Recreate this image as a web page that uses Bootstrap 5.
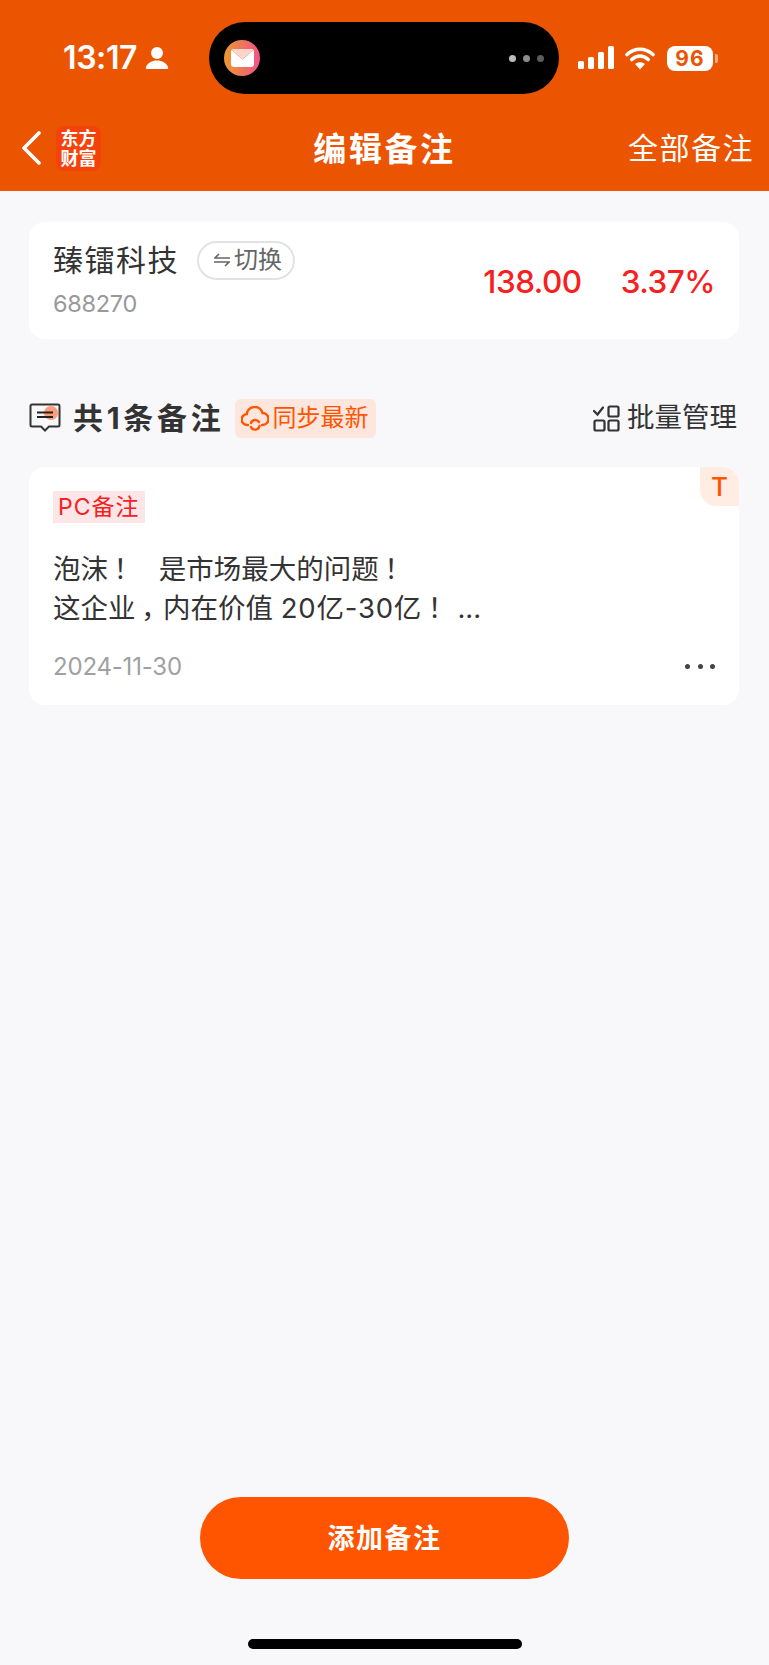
<!DOCTYPE html>
<html lang="zh-CN">
<head>
  <meta charset="UTF-8" />
  <meta name="viewport" content="width=device-width, initial-scale=1.0" />
  <title>编辑备注</title>
  <link rel="stylesheet" href="https://cdn.jsdelivr.net/npm/bootstrap@5.3.0/dist/css/bootstrap.min.css" />
  <style>
    body { background: #f8f8fa; font-family: Inter, "Noto Sans CJK SC", sans-serif; color: #333; width: 769px; height: 1665px; overflow: hidden; }
    .app-top { background: #eb5502; height: 191px; color: #fff; }
    .status-row { padding: 22px 0 0 63px; }
    .clock { width: 74px; font-size: 32px; font-weight: 600; line-height: 72px; letter-spacing: -.4px; white-space: nowrap; }
    .island { width: 350px; height: 72px; border-radius: 36px; background: #000; margin-left: 40px; padding: 0 15px; }
    .mail-dot { width: 36px; height: 36px; border-radius: 50%; background: linear-gradient(90deg, #ec9a2c, #f2528a); }
    .island-dots { gap: 7px; }
    .island-dots i { width: 7px; height: 7px; border-radius: 50%; display: block; }
    .batt { width: 46px; height: 25px; background: #fff; border-radius: 8px; color: #eb5502; font-size: 21px; font-weight: 700; line-height: 25px; text-align: center; letter-spacing: 1px; margin-left: 12px; }
    .batt-nub { width: 3px; height: 9px; background: rgba(255,255,255,.5); border-radius: 0 2px 2px 0; margin-left: 2px; }
    .nav-row { height: 97px; padding: 11px 15px 0 21px; position: relative; }
    .app-logo { width: 45px; height: 45px; background: #f5420a; border-radius: 8px; font-size: 18px; line-height: 20px; font-weight: 700; text-align: center; margin-left: 15px; padding-top: 3px; }
    .page-title { position: absolute; left: 0; right: 0; top: 7px; line-height: 97px; text-align: center; font-size: 33px; font-weight: 700; letter-spacing: 2.6px; }
    .nav-link-all { font-size: 30px; letter-spacing: 1.5px; }
    .panel { background: #fff; border-radius: 16px; margin: 0 30px 0 29px; }
    .stock-panel { margin-top: 31px; height: 117px; padding: 18px 24px 0 24px; }
    .stock-name { font-size: 30px; line-height: 40px; letter-spacing: 1.5px; }
    .switch-pill { height: 39px; width: 98px; border: 2px solid #e2e2e2; border-radius: 20px; font-size: 24px; color: #666; margin-left: 18px; padding-left: 4px; }
    .stock-code { font-size: 23.5px; color: #999; line-height: 30px; margin-top: 9px; letter-spacing: -.3px; }
    .stock-prices { gap: 39px; height: 62px; margin-top: 11px; }
    .stock-num { color: #f72020; font-size: 31.5px; font-weight: 500; letter-spacing: -.5px; }
    .section-row { margin: 59px 32px 0 29px; height: 40px; }
    .section-title { font-size: 30px; font-weight: 700; margin-left: 12px; letter-spacing: 3.7px; }
    .sync-tag { background: #fce6de; color: #ff5500; height: 39px; width: 141px; border-radius: 6px; font-size: 24px; margin-left: 11px; padding-left: 6px; gap: 3px; }
    .batch-text { font-size: 27.5px; margin-left: 7px; }
    .note-panel { margin-top: 29px; height: 238px; padding: 24px 24px 0 24px; position: relative; overflow: hidden; }
    .pc-tag { display: inline-block; background: #fde6e8; color: #f72020; font-size: 23px; line-height: 32px; height: 32px; padding: 0 5px; letter-spacing: 1px; }
    .note-text { font-size: 27.5px; line-height: 39px; margin: 27px 0 0 0; white-space: pre; }
    .cjk-punct { padding-left: .2em; letter-spacing: -.2em; }
    .num-run { letter-spacing: .8px; }
    .note-date { font-size: 24px; color: #a0a0a0; margin: 19px 0 0 0; line-height: 40px; letter-spacing: -.2px; }
    .more-dots { gap: 7.500px; margin-top: 17px; }
    .more-dots i { width: 5px; height: 5px; border-radius: 50%; background: #444; display: block; }
    .t-corner { position: absolute; right: 0; top: 0; width: 39px; height: 39px; background: #ffece3; color: #ff5500; font-size: 26px; font-weight: 500; text-align: center; line-height: 39px; border-radius: 0 16px 0 16px; }
    .add-btn { width: 369px; height: 82px; border-radius: 41px; background: #ff5500; color: #fff; font-size: 27px; font-weight: 700; letter-spacing: 1.5px; border: 0; padding-top: 8px; }
    .add-btn:hover { background: #ff5500; color: #fff; }
    .home-bar { width: 274px; height: 10px; border-radius: 5px; background: #000; margin: 60px auto 16px; }
  </style>
</head>
<body class="d-flex flex-column">
  <header class="app-top">
    <div class="status-row d-flex align-items-center">
      <div class="clock">13:17</div>
      <svg class="ms-2" width="24" height="24" viewBox="0 0 24 24" fill="#fff"><circle cx="12" cy="7" r="6"/><path d="M2 23c-1 0-1.500-.8-1-2 1.500-4 6-6.500 11-6.500s9.500 2.500 11 6.500c.5 1.200 0 2-1 2z"/></svg>
      <div class="island d-flex align-items-center justify-content-between">
        <div class="mail-dot d-flex align-items-center justify-content-center">
          <svg width="23" height="18" viewBox="0 0 23 18"><rect width="23" height="18" rx="3" fill="#fff"/><path d="M1 0h21l-10.500 9z" fill="#fbd5cb"/><path d="M1 1l10.500 9L22 1" fill="none" stroke="#f08a70" stroke-width=".8"/></svg>
        </div>
        <div class="island-dots d-flex">
          <i style="background:#bdbdbd"></i><i style="background:#8c8c8c"></i><i style="background:#5c5c5c"></i>
        </div>
      </div>
      <svg style="margin-left:19px" width="36" height="24" viewBox="0 0 36 24" fill="#fff"><rect y="15" width="6" height="8" rx="1.500"/><rect x="10" y="11" width="6" height="12" rx="1.500"/><rect x="20" y="6" width="6" height="17" rx="1.500"/><rect x="30" y="0" width="6" height="23" rx="1.500"/></svg>
      <svg style="margin-left:11px" width="30" height="24" viewBox="0 0 30 24"><path d="M2 8.500C9.500 1.500 20.500 1.500 28 8.500M6.800 13.500c5-4.500 11.400-4.500 16.400 0" fill="none" stroke="#fff" stroke-width="3.600" stroke-linecap="round"/><path d="M15 23.500l-5-5.500c3-2.400 7-2.400 10 0z" fill="#fff"/></svg>
      <div class="batt">96</div>
      <div class="batt-nub"></div>
    </div>
    <div class="nav-row d-flex align-items-center">
      <svg width="20" height="34" viewBox="0 0 20 34" fill="none"><path d="M18 2L3 17l15 15" stroke="#fff" stroke-width="3.600" stroke-linecap="round" stroke-linejoin="round"/></svg>
      <div class="app-logo">东方<br />财富</div>
      <div class="page-title">编辑备注</div>
      <div class="nav-link-all ms-auto">全部备注</div>
    </div>
  </header>

  <section class="panel stock-panel d-flex justify-content-between">
    <div>
      <div class="d-flex align-items-center">
        <span class="stock-name">臻镭科技</span>
        <span class="switch-pill d-flex align-items-center justify-content-center gap-1">
          <svg width="16" height="14" viewBox="0 0 16 14" fill="none" stroke="#666" stroke-width="1.600"><path d="M16 5H1l4-4M0 9h15l-4 4"/></svg>切换
        </span>
      </div>
      <div class="stock-code">688270</div>
    </div>
    <div class="d-flex align-items-center stock-num stock-prices">
      <span>138.00</span><span>3.37%</span>
    </div>
  </section>

  <section class="section-row d-flex align-items-center">
    <svg width="32" height="30" viewBox="0 0 32 30" fill="none"><path d="M3 1.500h26a1.500 1.500 0 0 1 1.500 1.500v19a1.500 1.500 0 0 1-1.500 1.500h-9L16 27.500l-4-4H3A1.500 1.500 0 0 1 1.500 22V3A1.500 1.500 0 0 1 3 1.500z" stroke="#333" stroke-width="2"/><circle cx="22" cy="10" r="7" fill="#fb9d78"/><path d="M8 9.500h16M8 14h16" stroke="#222" stroke-width="2"/></svg>
    <span class="section-title">共1条备注</span>
    <span class="sync-tag d-flex align-items-center">
      <svg width="28" height="25" viewBox="0 0 28 25" fill="none" stroke="#ff5500" stroke-width="2.400" stroke-linecap="round"><path d="M7 19H6.500a5.500 5.500 0 0 1-.7-11A8 8 0 0 1 21.500 7a6 6 0 0 1 0 12H21"/><path d="M10 17a4.500 4.500 0 0 1 8-1M18.500 20a4.500 4.500 0 0 1-8.500 1"/></svg>
      同步最新
    </span>
    <span class="ms-auto d-flex align-items-center">
      <svg width="27" height="27" viewBox="0 0 27 27" fill="none" stroke="#333" stroke-width="2.200"><path d="M1 6l3.500 3.500L10 2.500" stroke-linecap="round"/><rect x="15.500" y="1.500" width="10" height="10" rx="1.500"/><rect x="1.500" y="15.500" width="10" height="10" rx="1.500"/><rect x="15.500" y="15.500" width="10" height="10" rx="1.500"/></svg>
      <span class="batch-text">批量管理</span>
    </span>
  </section>

  <section class="panel note-panel">
    <div class="t-corner">T</div>
    <span class="pc-tag">PC备注</span>
    <div class="note-text">泡沫<span class="cjk-punct">！</span>   是市场最大的问题<span class="cjk-punct">！</span>
这企业<span class="cjk-punct">，</span>内在价值 <span class="num-run">20亿-30亿</span><span class="cjk-punct">！</span> ...</div>
    <div class="d-flex justify-content-between align-items-center">
      <div class="note-date">2024-11-30</div>
      <div class="more-dots d-flex"><i></i><i></i><i></i></div>
    </div>
  </section>

  <div class="mt-auto text-center">
    <button type="button" class="btn add-btn">添加备注</button>
  </div>
  <div class="home-bar"></div>
</body>
</html>
